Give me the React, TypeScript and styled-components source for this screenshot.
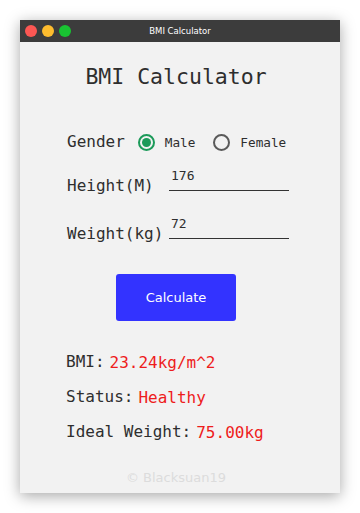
import styled, { createGlobalStyle } from "styled-components";

const GlobalStyle = createGlobalStyle`
  html, body {
    margin: 0;
    padding: 0;
    background: #ffffff;
  }
`;

const MONO = `"DejaVu Sans Mono", "Liberation Mono", monospace`;
const SANS = `"DejaVu Sans", "Liberation Sans", sans-serif`;

const Page = styled.div`
  padding: 20px;
  width: 320px;
`;

const Window = styled.div`
  width: 320px;
  background: #f2f2f2;
  box-shadow: 0 3px 14px rgba(0, 0, 0, 0.35);
  display: flex;
  flex-direction: column;
`;

const TitleBar = styled.div`
  height: 22px;
  background: #3c3c3c;
  display: flex;
  align-items: center;
  position: relative;
  padding-left: 5px;
  gap: 5px;
`;

const Light = styled.span<{ $color: string }>`
  width: 12px;
  height: 12px;
  border-radius: 50%;
  background: ${({ $color }) => $color};
`;

const TitleText = styled.span`
  position: absolute;
  left: 0;
  right: 0;
  text-align: center;
  font-family: ${SANS};
  font-size: 8.5px;
  color: #ffffff;
  pointer-events: none;
`;

const Content = styled.div`
  padding: 0 8px 7px 0;
  display: flex;
  flex-direction: column;
`;

const Heading = styled.h1`
  margin: 20px 0 0;
  text-align: center;
  font-family: ${MONO};
  font-weight: normal;
  font-size: 21.5px;
  line-height: 30px;
  color: #2e2e2e;
`;

const Form = styled.div`
  padding-left: 47px;
  display: flex;
  flex-direction: column;
`;

const GenderRow = styled.div`
  margin-top: 38px;
  height: 24px;
  display: flex;
  align-items: center;
`;

const Label = styled.span`
  font-family: ${MONO};
  font-size: 16px;
  line-height: 20px;
  color: #2e2e2e;
  white-space: nowrap;
`;

const Radio = styled.span<{ $checked?: boolean }>`
  box-sizing: border-box;
  width: 17px;
  height: 17px;
  border-radius: 50%;
  border: 2px solid ${({ $checked }) => ($checked ? "#1b9a59" : "#5a5a5a")};
  display: flex;
  align-items: center;
  justify-content: center;
  margin-left: ${({ $checked }) => ($checked ? "13px" : "18px")};
  &::after {
    content: "";
    width: 9px;
    height: 9px;
    border-radius: 50%;
    background: #1b9a59;
    display: ${({ $checked }) => ($checked ? "block" : "none")};
  }
`;

const RadioText = styled.span`
  margin-left: 10px;
  font-family: ${MONO};
  font-size: 12.7px;
  color: #2e2e2e;
`;

const FieldRow = styled.div<{ $mt: number }>`
  margin-top: ${({ $mt }) => $mt}px;
  height: 30px;
  display: grid;
  grid-template-columns: 102px 120px;
  align-items: end;
`;

const Input = styled.input`
  box-sizing: border-box;
  width: 120px;
  height: 23px;
  margin-bottom: 5px;
  padding: 0 0 7px 2px;
  border: none;
  border-bottom: 1px solid #333333;
  background: transparent;
  font-family: ${MONO};
  font-size: 13px;
  line-height: 15px;
  color: #2e2e2e;
  outline: none;
`;

const ButtonWrap = styled.div`
  margin-top: 30px;
  display: flex;
  justify-content: center;
`;

const Button = styled.button`
  width: 120px;
  height: 47px;
  border: none;
  border-radius: 3px;
  background: #3333ff;
  color: #ffffff;
  font-family: ${SANS};
  font-size: 13px;
`;

const Results = styled.div`
  margin-top: 29px;
  padding-left: 46px;
  display: flex;
  flex-direction: column;
  gap: 11px;
`;

const ResultRow = styled.div`
  height: 24px;
  display: flex;
  align-items: center;
  gap: 5px;
`;

const Value = styled.span`
  font-family: ${MONO};
  font-size: 16px;
  color: #ee1c1c;
`;

const Footer = styled.div`
  margin-top: 26px;
  text-align: center;
  font-family: ${SANS};
  font-size: 13px;
  line-height: 16px;
  color: #dcdcdc;
`;

export default function App() {
  return (
    <Page>
      <GlobalStyle />
      <Window>
        <TitleBar>
          <Light $color="#fc5753" />
          <Light $color="#fdbc2e" />
          <Light $color="#19c332" />
          <TitleText>BMI Calculator</TitleText>
        </TitleBar>
        <Content>
          <Heading>BMI Calculator</Heading>
          <Form>
            <GenderRow>
              <Label>Gender</Label>
              <Radio $checked />
              <RadioText>Male</RadioText>
              <Radio />
              <RadioText>Female</RadioText>
            </GenderRow>
            <FieldRow $mt={12}>
              <Label>Height(M)</Label>
              <Input defaultValue="176" />
            </FieldRow>
            <FieldRow $mt={18}>
              <Label>Weight(kg)</Label>
              <Input defaultValue="72" />
            </FieldRow>
          </Form>
          <ButtonWrap>
            <Button>Calculate</Button>
          </ButtonWrap>
          <Results>
            <ResultRow>
              <Label>BMI:</Label>
              <Value>23.24kg/m^2</Value>
            </ResultRow>
            <ResultRow>
              <Label>Status:</Label>
              <Value>Healthy</Value>
            </ResultRow>
            <ResultRow>
              <Label>Ideal Weight:</Label>
              <Value>75.00kg</Value>
            </ResultRow>
          </Results>
          <Footer>© Blacksuan19</Footer>
        </Content>
      </Window>
    </Page>
  );
}
